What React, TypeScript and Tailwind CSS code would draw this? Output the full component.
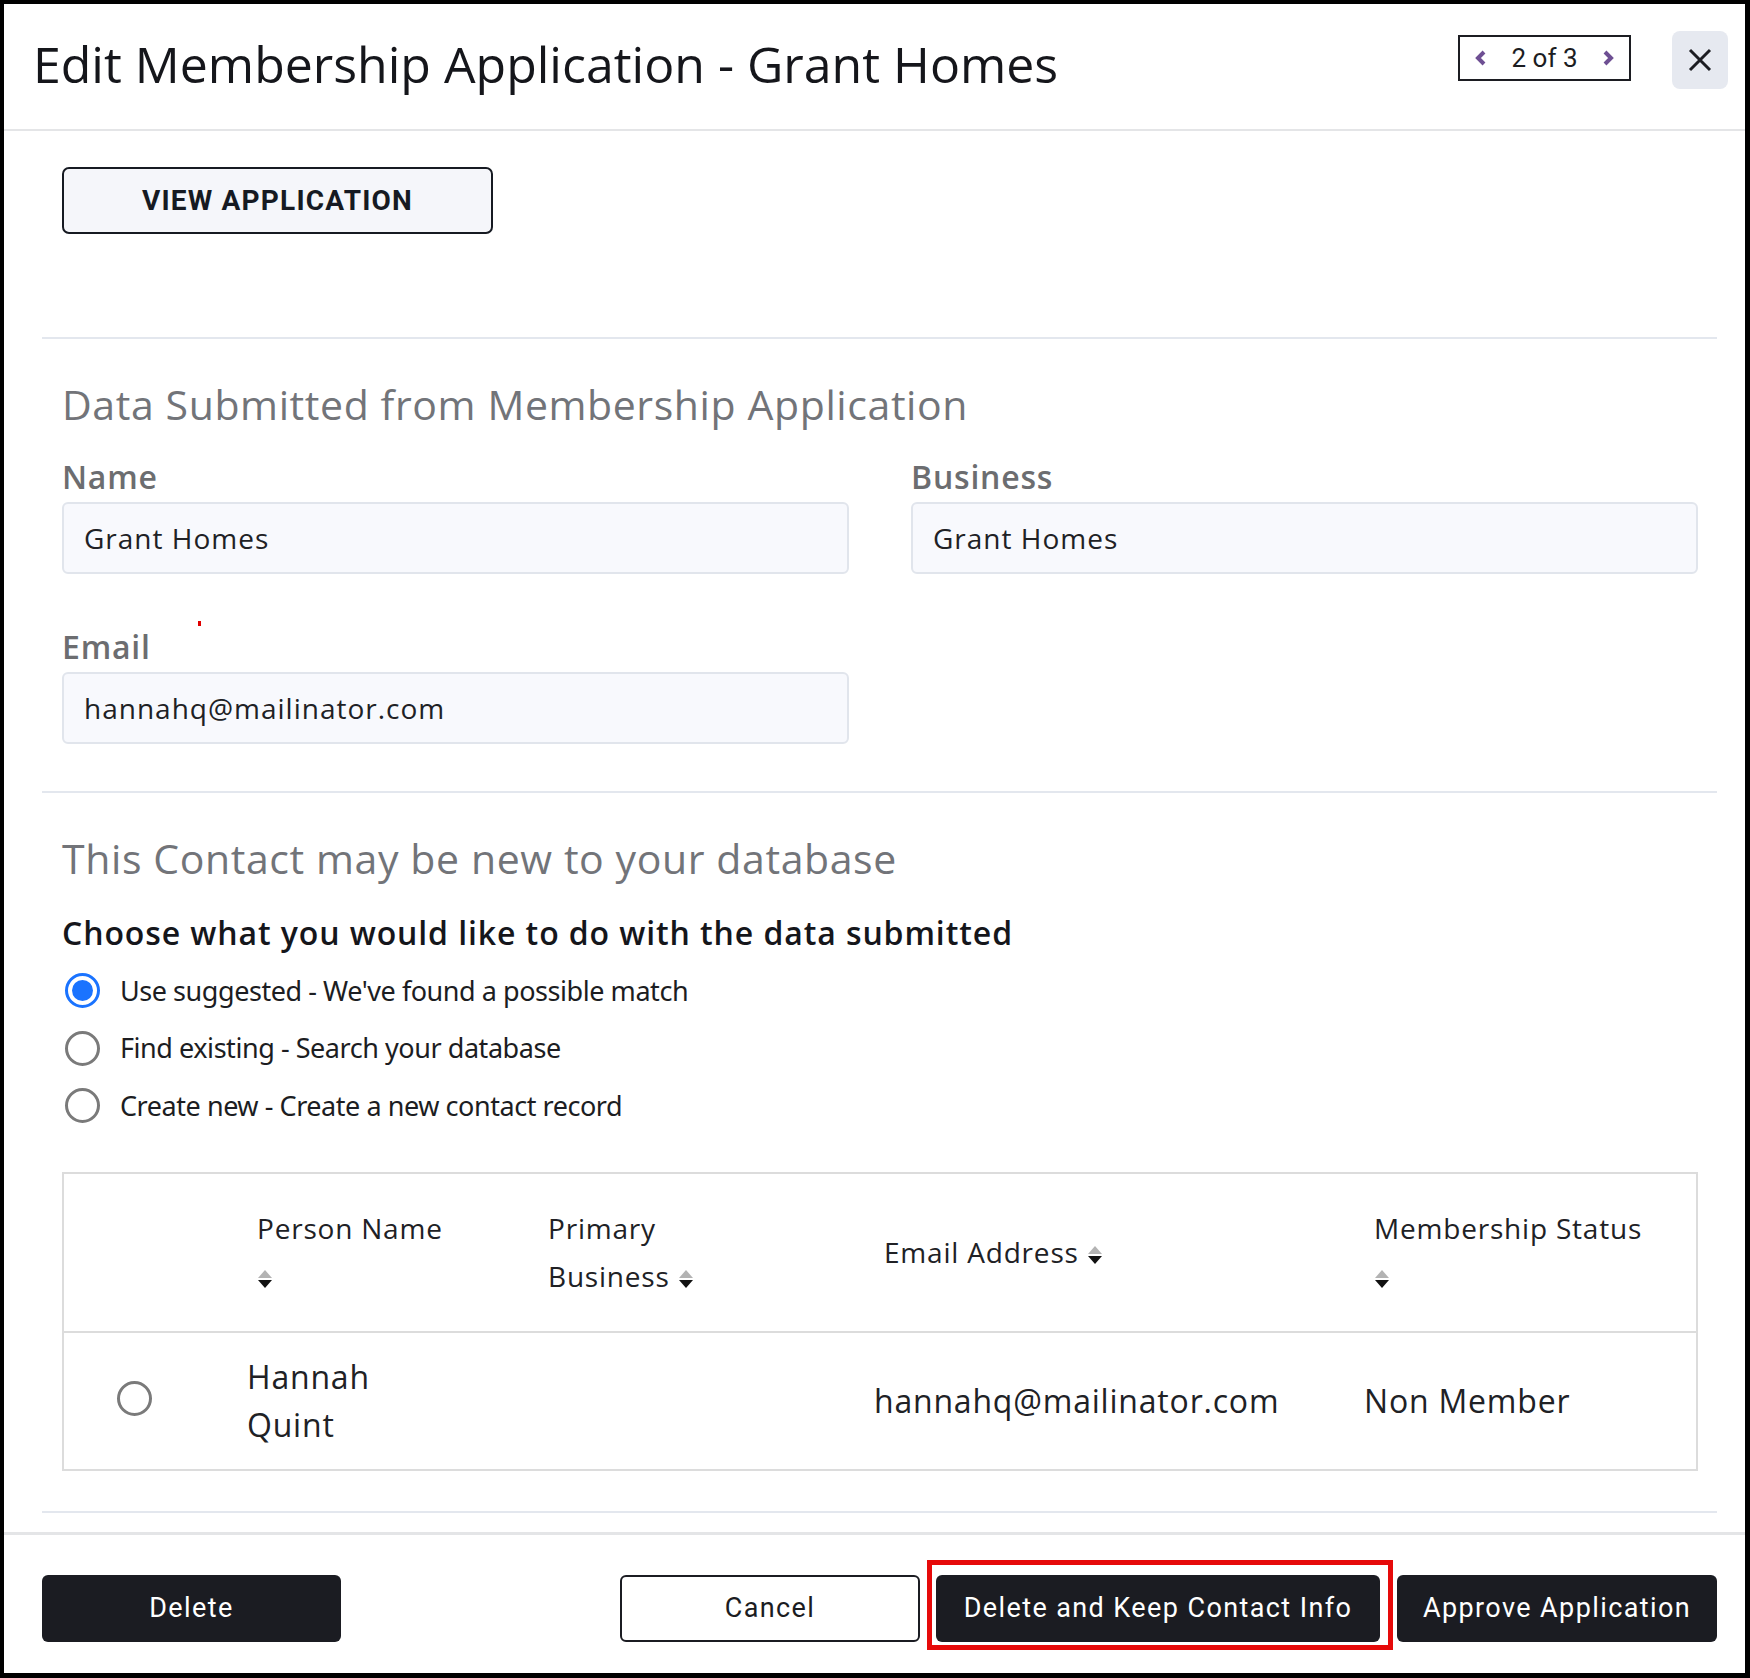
import React, { useState } from "react";

const SortIcon = () => (
  <svg width="16" height="22" viewBox="0 0 16 22" className="inline-block align-[-3px]">
    <path d="M8 2 L15 10 L1 10 Z" fill="#b3b3b3" />
    <path d="M1 12 L15 12 L8 20 Z" fill="#111" />
  </svg>
);

const Radio = ({ checked, onClick }: { checked: boolean; onClick?: () => void }) => (
  <button
    type="button"
    onClick={onClick}
    className={
      checked
        ? "w-[35px] h-[35px] rounded-full border-[3px] border-[#1a73ff] flex items-center justify-center shrink-0"
        : "w-[35px] h-[35px] rounded-full border-[3px] border-[#7a7a7a] shrink-0"
    }
  >
    {checked && <span className="w-[21px] h-[21px] rounded-full bg-[#1a73ff]" />}
  </button>
);

const options = [
  "Use suggested - We've found a possible match",
  "Find existing - Search your database",
  "Create new - Create a new contact record",
];

const App = () => {
  const [choice, setChoice] = useState(0);
  const [rowSelected, setRowSelected] = useState(false);

  return (
    <div className="w-[1750px] h-[1678px] border-[4px] border-b-[5px] border-r-[5px] border-black bg-white flex flex-col font-['Open_Sans',sans-serif] text-[#1c1d22]">
      {/* header */}
      <div className="h-[127px] shrink-0 flex items-start justify-between pl-[29px] pr-[17px] border-b-2 border-[#e4e5e7]">
        <h1 className="mt-[30px] text-[50px] leading-[60px] text-[#15161b]">
          Edit Membership Application - Grant Homes
        </h1>
        <div className="flex items-start gap-[41px]">
          <div className="mt-[31px] w-[173px] h-[46px] border-2 border-[#1c1d22] flex items-center justify-between px-[15px] font-['Roboto',sans-serif] text-[26px]">
            <svg width="12" height="16" viewBox="0 0 12 16">
              <path d="M9 2 L3 8 L9 14" stroke="#6e4f93" strokeWidth="4" fill="none" />
            </svg>
            <span>2 of 3</span>
            <svg width="12" height="16" viewBox="0 0 12 16">
              <path d="M3 2 L9 8 L3 14" stroke="#6e4f93" strokeWidth="4" fill="none" />
            </svg>
          </div>
          <button className="mt-[27px] w-[56px] h-[58px] rounded-[8px] bg-[#e6e9f0] flex items-center justify-center">
            <svg width="24" height="24" viewBox="0 0 24 24">
              <path d="M2 2 L22 22 M22 2 L2 22" stroke="#1c1d22" strokeWidth="3" />
            </svg>
          </button>
        </div>
      </div>

      {/* body */}
      <div className="flex-1 pl-[38px] pr-[28px]">
        <div className="pl-[20px] pr-[19px] pt-[36px]">
          <button className="w-[431px] h-[67px] rounded-[7px] border-2 border-[#161a22] bg-[#f5f6fa] font-['Roboto',sans-serif] font-bold text-[28px] tracking-[1.2px] text-[#161a22]">
            VIEW APPLICATION
          </button>
        </div>

        <div className="mt-[103px] border-t-2 border-[#e3e7ee]" />

        <div className="pl-[20px] pr-[19px]">
          <h2 className="mt-[37px] text-[41px] leading-[56px] text-[#727479] tracking-[0.6px]">
            Data Submitted from Membership Application
          </h2>

          <div className="mt-[24px] grid grid-cols-2 gap-x-[62px]">
            <div>
              <label className="block text-[32px] leading-[42px] font-semibold text-[#6c6d70] tracking-[0.8px]">Name</label>
              <div className="mt-[4px] h-[72px] rounded-[6px] border-2 border-[#e1e5ec] bg-[#f8f9fd] flex items-center px-[20px] text-[28px] tracking-[1px] text-[#202125]">
                Grant Homes
              </div>
            </div>
            <div>
              <label className="block text-[32px] leading-[42px] font-semibold text-[#6c6d70] tracking-[0.8px]">Business</label>
              <div className="mt-[4px] h-[72px] rounded-[6px] border-2 border-[#e1e5ec] bg-[#f8f9fd] flex items-center px-[20px] text-[28px] tracking-[1px] text-[#202125]">
                Grant Homes
              </div>
            </div>
            <div className="mt-[52px]">
              <label className="relative block text-[32px] leading-[42px] font-semibold text-[#6c6d70] tracking-[0.8px]">
                Email
                <span className="absolute left-[136px] top-[-5px] w-[3px] h-[5px] bg-[#e00000]" />
              </label>
              <div className="mt-[4px] h-[72px] rounded-[6px] border-2 border-[#e1e5ec] bg-[#f8f9fd] flex items-center px-[20px] text-[28px] tracking-[1px] text-[#202125]">
                hannahq@mailinator.com
              </div>
            </div>
          </div>
        </div>

        <div className="mt-[47px] border-t-2 border-[#e3e7ee]" />

        <div className="pl-[20px] pr-[19px]">
          <h2 className="mt-[37px] text-[41px] leading-[56px] text-[#727479] tracking-[0.6px]">
            This Contact may be new to your database
          </h2>
          <p className="mt-[26px] text-[32px] leading-[42px] font-semibold tracking-[0.9px] text-[#15161b]">
            Choose what you would like to do with the data submitted
          </p>

          <div className="mt-[8px] flex flex-col">
            {options.map((o, i) => (
              <div key={o} className="h-[57.5px] flex items-center gap-[20px] pl-[3px]">
                <Radio checked={choice === i} onClick={() => setChoice(i)} />
                <span className="font-['Noto_Sans',sans-serif] text-[27px] tracking-[-0.45px] text-[#1c1d22]">{o}</span>
              </div>
            ))}
          </div>

          {/* match table */}
          <div className="mt-[37px] border-2 border-[#dcdcdc]">
            <div className="h-[159px] grid grid-cols-[175px_291px_336px_490px_1fr] items-center border-b-2 border-[#dcdcdc] text-[28px] leading-[48px] tracking-[0.8px] text-[#202125]">
              <div />
              <div className="pl-[18px]">
                Person Name
                <div><SortIcon /></div>
              </div>
              <div className="pl-[18px]">
                Primary
                <div>
                  Business <SortIcon />
                </div>
              </div>
              <div className="pl-[18px]">
                Email Address <SortIcon />
              </div>
              <div className="pl-[18px]">
                Membership Status
                <div><SortIcon /></div>
              </div>
            </div>
            <div className="h-[136px] grid grid-cols-[175px_291px_336px_490px_1fr] items-center text-[32px] leading-[48px] tracking-[0.8px] text-[#202125]">
              <div className="pl-[53px]">
                <Radio checked={rowSelected} onClick={() => setRowSelected(!rowSelected)} />
              </div>
              <div className="pl-[8px]">
                Hannah
                <br />
                Quint
              </div>
              <div />
              <div className="pl-[8px]">hannahq@mailinator.com</div>
              <div className="pl-[8px]">Non Member</div>
            </div>
          </div>
        </div>

        <div className="mt-[40px] border-t-2 border-[#e3e7ee]" />
      </div>

      {/* footer */}
      <div className="h-[141px] shrink-0 border-t-[3px] border-[#e4e5e7] flex items-start pt-[40px] pl-[38px] pr-[28px] font-['Roboto',sans-serif] text-[27px] tracking-[1.4px]">
        <button className="w-[299px] h-[67px] rounded-[6px] bg-[#1b1c22] text-white">Delete</button>
        <div className="flex-1" />
        <button className="w-[300px] h-[67px] rounded-[6px] border-2 border-[#1b1c22] bg-white text-[#1b1c22]">Cancel</button>
        <div className="relative ml-[16px]">
          <span className="absolute left-[-9px] right-[-13px] top-[-15px] bottom-[-8px] border-[5px] border-[#e60a0a] pointer-events-none" />
          <button className="w-[444px] h-[67px] rounded-[6px] bg-[#1b1c22] text-white">Delete and Keep Contact Info</button>
        </div>
        <button className="ml-[17px] w-[320px] h-[67px] rounded-[6px] bg-[#1b1c22] text-white">Approve Application</button>
      </div>
    </div>
  );
};

export default App;
